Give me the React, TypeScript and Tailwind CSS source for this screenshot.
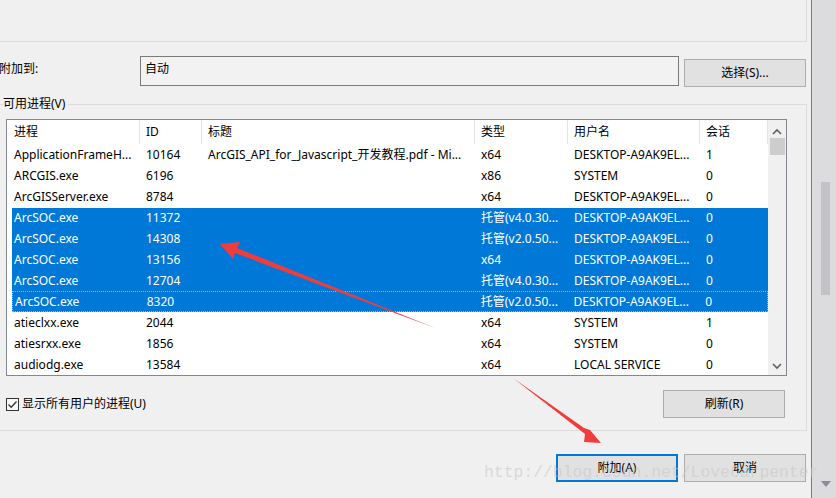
import React from "react"

type Row = {
  name: string
  id: string
  title?: string
  type: string
  user: string
  session: string
  selected?: boolean
  focused?: boolean
}

const rows: Row[] = [
  { name: "ApplicationFrameH...", id: "10164", title: "ArcGIS_API_for_Javascript_开发教程.pdf - Mi...", type: "x64", user: "DESKTOP-A9AK9EL...", session: "1" },
  { name: "ARCGIS.exe", id: "6196", type: "x86", user: "SYSTEM", session: "0" },
  { name: "ArcGISServer.exe", id: "8784", type: "x64", user: "DESKTOP-A9AK9EL...", session: "0" },
  { name: "ArcSOC.exe", id: "11372", type: "托管(v4.0.30...", user: "DESKTOP-A9AK9EL...", session: "0", selected: true },
  { name: "ArcSOC.exe", id: "14308", type: "托管(v2.0.50...", user: "DESKTOP-A9AK9EL...", session: "0", selected: true },
  { name: "ArcSOC.exe", id: "13156", type: "x64", user: "DESKTOP-A9AK9EL...", session: "0", selected: true },
  { name: "ArcSOC.exe", id: "12704", type: "托管(v4.0.30...", user: "DESKTOP-A9AK9EL...", session: "0", selected: true },
  { name: "ArcSOC.exe", id: "8320", type: "托管(v2.0.50...", user: "DESKTOP-A9AK9EL...", session: "0", selected: true, focused: true },
  { name: "atieclxx.exe", id: "2044", type: "x64", user: "SYSTEM", session: "1" },
  { name: "atiesrxx.exe", id: "1856", type: "x64", user: "SYSTEM", session: "0" },
  { name: "audiodg.exe", id: "13584", type: "x64", user: "LOCAL SERVICE", session: "0" },
]

const headers = [
  { label: "进程", w: "w-[133px] pl-[7px]" },
  { label: "ID", w: "w-[62px] pl-[6px]" },
  { label: "标题", w: "w-[273px] pl-[6px]" },
  { label: "类型", w: "w-[93px] pl-[6px]" },
  { label: "用户名", w: "w-[132px] pl-[6px]" },
  { label: "会话", w: "w-[68px] pl-[6px]" },
]

function WinButton({ label, primary }: { label: string; primary?: boolean }) {
  return (
    <div
      className={
        "w-[122px] h-[28px] flex items-center justify-center bg-[#e1e1e1] text-[12px] text-black " +
        (primary ? "border-2 border-[#0078d7]" : "border border-[#adadad]")
      }
    >
      {label}
    </div>
  )
}

function ListRow({ r }: { r: Row }) {
  const sel = r.selected
  return (
    <div
      className={
        "ml-[5px] h-[21px] flex items-center whitespace-nowrap text-[12px] " +
        (sel ? "bg-[#0078d7] text-white " : "text-black ") +
        (r.focused ? "border border-dotted border-[#f5a345]" : "")
      }
    >
      <div className="w-[127px] pl-[2px] overflow-hidden">{r.name}</div>
      <div className="w-[62px] pl-[7px] overflow-hidden">{r.id}</div>
      <div className="w-[273px] pl-[7px] overflow-hidden">{r.title ?? ""}</div>
      <div className="w-[93px] pl-[7px] overflow-hidden">{r.type}</div>
      <div className="w-[132px] pl-[7px] overflow-hidden">{r.user}</div>
      <div className="w-[69px] pl-[7px] overflow-hidden">{r.session}</div>
    </div>
  )
}

export default function App() {
  return (
    <div className="relative w-[836px] h-[498px] overflow-hidden bg-[#f0f0f0] flex [font-family:'Noto_Sans','Noto_Sans_CJK_SC',sans-serif] text-black">
      {/* dialog body */}
      <div className="w-[811px] h-full flex flex-col">
        <div className="w-[807px] h-[42px] border-r border-b border-[#dcdcdc]" />

        <div className="flex mt-[14px] h-[31px]">
          <div className="w-[141px] -ml-[1px] pt-[5px] text-[12px] leading-[16px]">附加到:</div>
          <div className="w-[539px] h-[30px] border border-[#7a7a7a] bg-[#f2f2f2] pl-[4px] pt-[4px] text-[12px] leading-[16px]">
            自动
          </div>
          <div className="ml-[5px] mt-[3px]">
            <WinButton label="选择(S)..." />
          </div>
        </div>

        {/* group box */}
        <div className="relative mt-[17px] -ml-[2px] w-[809px] h-[327px] border border-[#dcdcdc] pt-[14px] pl-[7px]">
          <span className="absolute -top-[9px] left-[4px] bg-[#f0f0f0] pr-[3px] text-[12px] leading-[16px]">
            可用进程(V)
          </span>

          <div className="w-[781px] h-[257px] border border-[#828790] bg-white flex overflow-hidden">
            <div className="w-[761px] flex flex-col">
              <div className="h-[25px] flex shrink-0 text-[12px]">
                {headers.map((h) => (
                  <div key={h.label} className={h.w + " h-[24px] flex items-center border-r border-[#e5e5e5]"}>
                    {h.label}
                  </div>
                ))}
              </div>
              {rows.map((r, i) => (
                <ListRow key={i} r={r} />
              ))}
            </div>
            <div className="w-[18px] bg-[#f0f0f0] flex flex-col items-center">
              <svg width="10" height="8" viewBox="0 0 10 8" className="mt-[8px]">
                <path d="M1 6 L5 2 L9 6" fill="none" stroke="#606060" strokeWidth="1.6" />
              </svg>
              <div className="mt-[2px] w-[15px] h-[17px] bg-[#cdcdcd]" />
              <svg width="10" height="8" viewBox="0 0 10 8" className="mt-auto mb-[5px]">
                <path d="M1 2 L5 6 L9 2" fill="none" stroke="#606060" strokeWidth="1.6" />
              </svg>
            </div>
          </div>

          <div className="flex items-center justify-between mt-[14px] w-[779px]">
            <div className="flex items-center gap-[3px] text-[12px]">
              <div className="w-[13px] h-[13px] border border-[#333333] bg-[#f7f7f7] flex items-center justify-center">
                <svg width="11" height="11" viewBox="0 0 11 11">
                  <path d="M1.5 5.5 L4.2 8.2 L9.5 2.5" fill="none" stroke="#333333" strokeWidth="1.3" />
                </svg>
              </div>
              <span>显示所有用户的进程(U)</span>
            </div>
            <WinButton label="刷新(R)" />
          </div>
        </div>

        <div className="flex justify-end gap-[6px] mt-[23px] mr-[5px]">
          <WinButton label="附加(A)" primary />
          <WinButton label="取消" />
        </div>
      </div>

      {/* window edge and outer scrollbar */}
      <div className="w-px h-full bg-[#3b8ad9]" />
      <div className="w-[24px] h-full bg-[#dcdcdf] flex flex-col">
        <div className="ml-[9px] mt-[182px] w-[9px] h-[113px] bg-[#c3c3c7]" />
        <svg width="10" height="6" viewBox="0 0 10 6" className="ml-[9px] mt-auto mb-[11px]">
          <path d="M0 0 L10 0 L5 6 Z" fill="#8a8a9a" />
        </svg>
      </div>

      {/* watermark */}
      <div className="absolute left-[484px] top-[462px] text-[16.4px] leading-[22px] text-[#c8c8c8]/60 [font-family:'Liberation_Mono',monospace] whitespace-nowrap pointer-events-none">
        http://blog.csdn.net/LoveCarpenter
      </div>

      {/* annotation arrows */}
      <svg className="absolute inset-0 pointer-events-none" width="836" height="498" viewBox="0 0 836 498">
        <polygon
          points="435,328 237,248 240,242 220,244 233,259 235,253"
          fill="#f23c3c"
        />
        <polygon
          points="513,378 584,428 590,430 601,443 584,442 585,434"
          fill="#f23c3c"
        />
      </svg>
    </div>
  )
}
